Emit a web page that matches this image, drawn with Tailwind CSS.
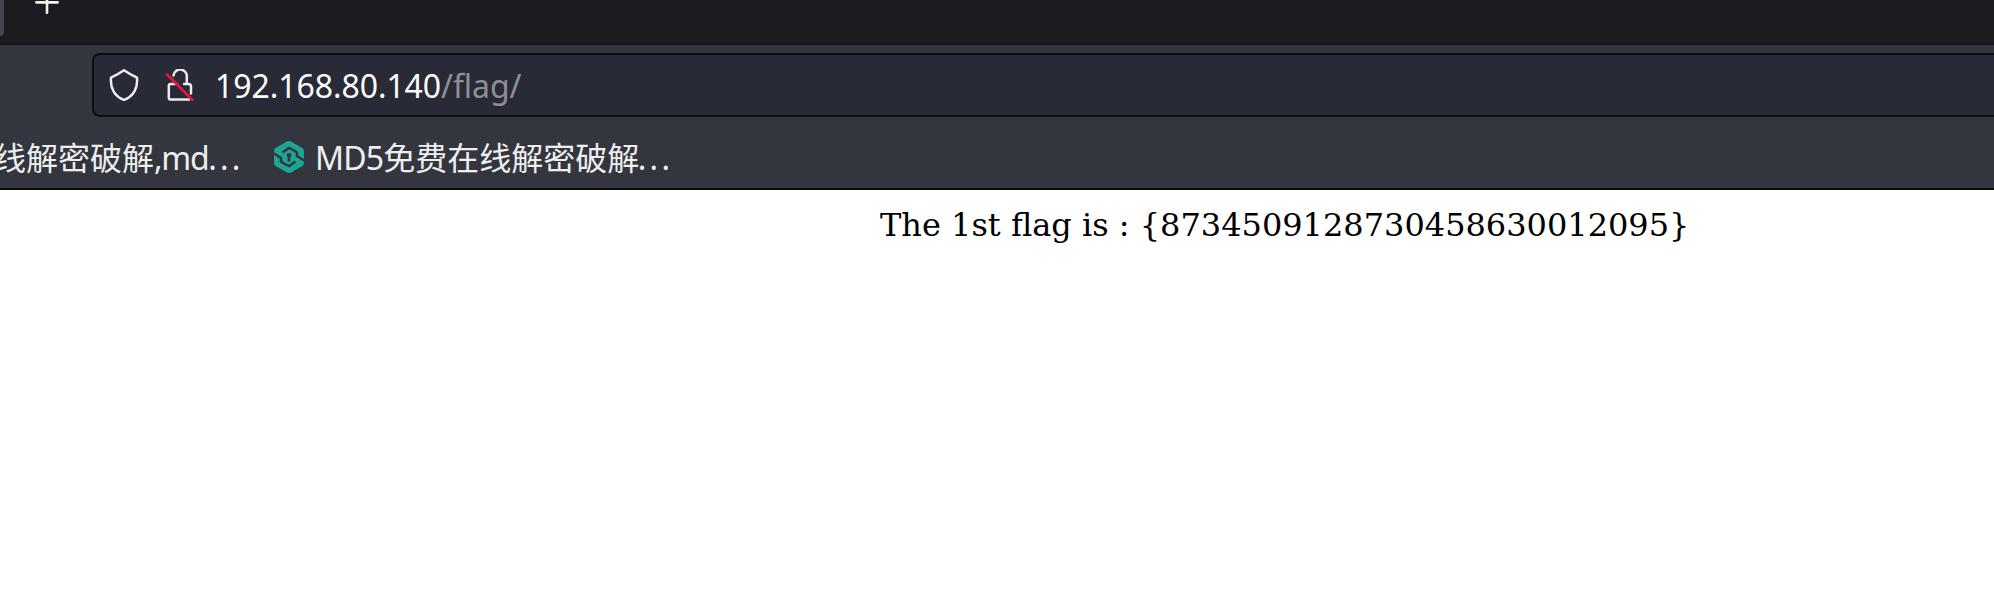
<!DOCTYPE html>
<html lang="zh-CN">
<head>
<meta charset="utf-8">
<title>192.168.80.140/flag/</title>
<script src="https://cdn.jsdelivr.net/npm/@tailwindcss/browser@4"></script>
</head>
<body class="h-[592px] overflow-hidden bg-white">
<header class="h-[190px] overflow-hidden border-b-2 border-[#0c0c11] bg-[#33363e] font-['Noto_Sans','Noto_Sans_CJK_SC',sans-serif] text-[32px] text-[#fbfbfe]">
  <div class="flex h-[45px] items-start border-b border-[#111216] bg-[#1b1c20]">
    <div class="h-9 w-1 rounded-br-md bg-[#42454c]"></div>
    <svg class="ml-[31px] h-[14px] w-6" viewBox="0 0 24 14" fill="none" stroke="#f4f3ef" stroke-width="2.6" stroke-linecap="round"><path d="M1.4 2.4h21.2M12 -9v21.8"/></svg>
  </div>
  <div class="flex h-[72px] pt-2 pl-[92px]">
    <div class="flex h-16 flex-1 items-center rounded-l-lg border-2 border-r-0 border-[#0c0c11] bg-[#282a35]">
      <svg class="ml-[14px] h-8 w-8" viewBox="0 0 32 32" fill="none" stroke="#ececee" stroke-width="2.5" stroke-linejoin="round"><path d="M16 1.2Q22 5.300 29 8.600C30 19 25.500 27.800 16 30.900C6.500 27.800 2 19 3 8.600Q10 5.300 16 1.200Z"/></svg>
      <svg class="ml-6 h-8 w-8" viewBox="0 0 32 32" fill="none" stroke-linecap="round" stroke-linejoin="round"><path d="M9.500 6.500A6.600 6.600 0 0 1 22.800 8V15M13 15H6.500Q4.800 15 4.800 17V28.500Q4.800 30.600 7 30.600H25M20 15H24.500Q27 15 27 17.500V24.500" stroke="#ececee" stroke-width="2.500"/><path d="M3 5.500L28.500 31" stroke="#e8143f" stroke-width="2.700"/></svg>
      <span class="ml-[19px] pt-[2px] whitespace-nowrap leading-[44px] tracking-[-0.07px]">192.168.80.140<span class="text-[#8e8f96]">/flag/</span></span>
    </div>
  </div>
  <nav class="flex h-[71px] items-center pt-[9px] whitespace-nowrap text-[#eeeeed]">
    <span class="-ml-[6px] w-[248px] pt-[2px]">线解密破解<span class="tracking-[-1.3px]">,md</span><span class="tracking-[3.2px]">...</span></span>
    <svg class="ml-8 h-8 w-[30px]" viewBox="0 0 30 32"><path fill="#1ba593" d="M12.500 .8Q15 -.6 17.500 .8L28 6.800Q30 8 30 10.500V21.500Q30 24 28 25.200L17.500 31.200Q15 32.600 12.500 31.200L2 25.200Q0 24 0 21.500V10.500Q0 8 2 6.800Z"/><path fill="none" stroke="#33363e" stroke-width="2.500" d="M-1 12L7 17V20.500L9 22L15 25L21.500 20.500M31 20L23 15V11.500L21 10L15 7L8.500 11.500"/><path fill="#33363e" d="M15 12a2.500 2.500 0 0 1 1.300 4.600V20.500H13.700V16.600A2.500 2.500 0 0 1 15 12Z"/></svg>
    <span class="ml-[11px] pt-[2px]"><span class="tracking-[-0.8px]">MD5</span>免费在线解密破<span class="tracking-[-1.5px]">解</span><span class="tracking-[3.2px]">...</span></span>
  </nav>
</header>
<main class="pt-[17px] pl-[880px] font-['DejaVu_Serif',serif] text-[32px] leading-[37px] whitespace-nowrap text-black">The 1st flag is : {8734509128730458630012095}</main>
</body>
</html>
